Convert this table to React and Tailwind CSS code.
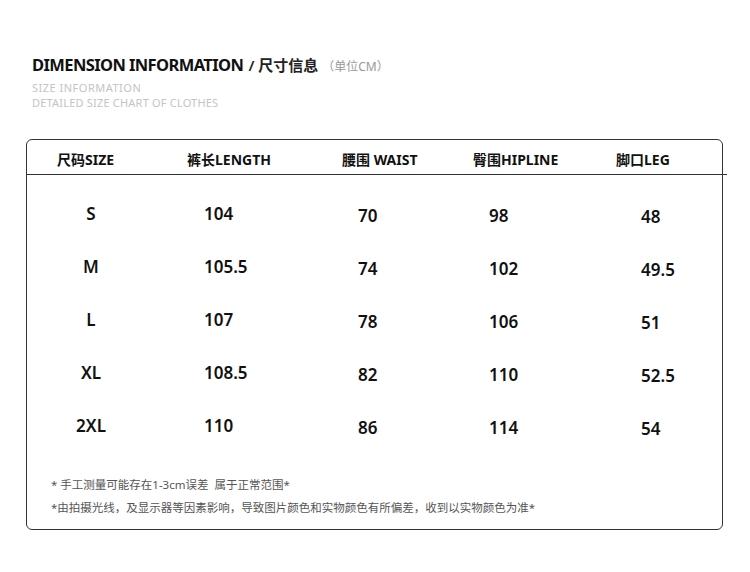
import React from 'react';

const rows = [
  ['S', '104', '70', '98', '48'],
  ['M', '105.5', '74', '102', '49.5'],
  ['L', '107', '78', '106', '51'],
  ['XL', '108.5', '82', '110', '52.5'],
  ['2XL', '110', '86', '114', '54'],
];

const font = { fontFamily: '"Noto Sans", "Noto Sans CJK SC", sans-serif' };

export default function App() {
  return (
    <div className="w-[750px] h-[572px] bg-white text-[#111]" style={font}>
      <div className="pt-[53px] pl-[32px]">
        <div className="flex items-baseline">
          <span className="text-[16.5px] font-bold tracking-[-0.6px] leading-[24px]">DIMENSION INFORMATION</span>
          <span className="ml-[5px] text-[15px] font-semibold text-[#222] leading-[24px]">/ 尺寸信息</span>
          <span className="ml-[4px] text-[12px] text-[#999] leading-[24px]">（单位CM）</span>
        </div>
        <div className="pt-[1px] text-[11px] tracking-[0.5px] leading-[15px] text-[#c4c4c4]">SIZE INFORMATION</div>
        <div className="text-[11px] tracking-[0.2px] leading-[15px] text-[#c4c4c4]">DETAILED SIZE CHART OF CLOTHES</div>
      </div>

      <div className="mt-[29px] ml-[26px] w-[697px] h-[391px] border border-[#333] rounded-[6px]">
        <div className="grid grid-cols-[160px_155px_131px_143px_1fr] h-[34px] pt-[5px] items-center text-[14px] font-bold">
          <div className="pl-[30px]">尺码SIZE</div>
          <div>裤长LENGTH</div>
          <div>腰围 WAIST</div>
          <div>臀围HIPLINE</div>
          <div>脚口LEG</div>
        </div>
        <div className="h-px bg-[#333] -ml-px w-[701px]" />

        <div className="pt-[20px]">
          {rows.map((r) => (
            <div key={r[0]} className="grid grid-cols-[160px_155px_131px_143px_1fr] h-[53px] text-[17px] font-semibold">
              <div className="w-[128px] text-center leading-[38px]">{r[0]}</div>
              <div className="pl-[17px] leading-[38px]">{r[1]}</div>
              <div className="pl-[16px] leading-[42px]">{r[2]}</div>
              <div className="pl-[16px] leading-[42px]">{r[3]}</div>
              <div className="pl-[25px] leading-[44px]">{r[4]}</div>
            </div>
          ))}
        </div>

        <div className="pl-[24px] pt-[13px] text-[11.5px] text-[#555]">
          <div className="leading-[23px]">* 手工测量可能存在1-3cm误差&nbsp;&nbsp;属于正常范围*</div>
          <div className="leading-[23px]">*由拍摄光线，及显示器等因素影响，导致图片颜色和实物颜色有所偏差，收到以实物颜色为准*</div>
        </div>
      </div>
    </div>
  );
}
